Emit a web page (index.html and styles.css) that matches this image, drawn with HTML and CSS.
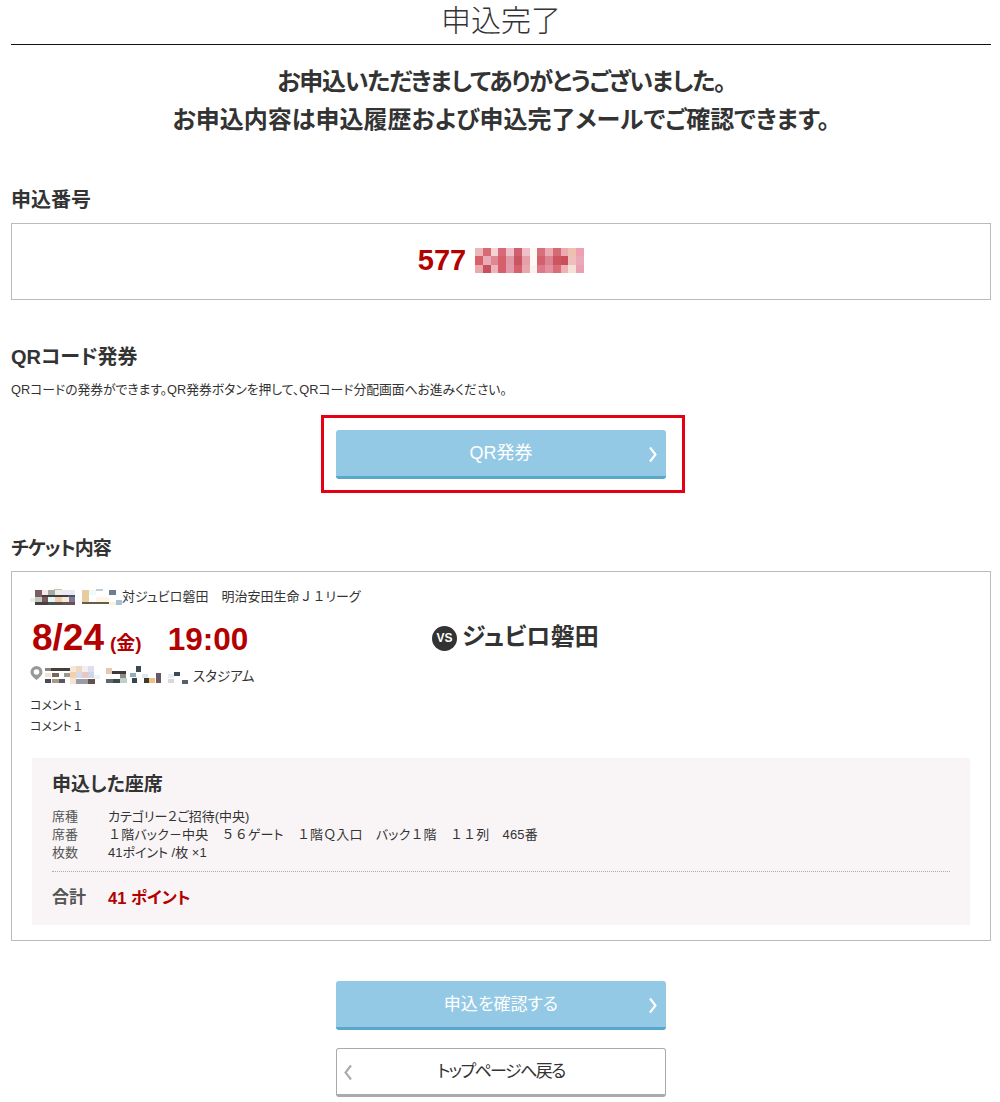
FILE: index.html
```html
<!DOCTYPE html>
<html lang="ja">
<head>
<meta charset="utf-8">
<title>申込完了</title>
<link rel="stylesheet" href="styles.css">
</head>
<body>
<main class="page">
  <h1 class="page-title">申込完了</h1>
  <div class="thanks">
    <p class="thanks-line tight">お申込いただきましてありがとうございました。</p>
    <p class="thanks-line">お申込内容は申込履歴および申込完了メールでご確認できます。</p>
  </div>

  <h2 class="section-title first">申込番号</h2>
  <div class="number-box">
    <span class="number">577</span>
    <svg class="mosaic-number" width="109" height="25" viewBox="0 0 14 3" preserveAspectRatio="none" shape-rendering="crispEdges" aria-hidden="true">
      <rect x="0" y="0" width="1.01" height="1.01" fill="#e9b9b9"/><rect x="1" y="0" width="1.01" height="1.01" fill="#d86a78"/><rect x="2" y="0" width="1.01" height="1.01" fill="#f2d5d0"/><rect x="3" y="0" width="1.01" height="1.01" fill="#d8697a"/><rect x="4" y="0" width="1.01" height="1.01" fill="#efbfc9"/><rect x="5" y="0" width="1.01" height="1.01" fill="#d06070"/><rect x="6" y="0" width="1.01" height="1.01" fill="#efc0c8"/><rect x="7" y="0" width="1.01" height="1.01" fill="#fdfaf5"/><rect x="8" y="0" width="1.01" height="1.01" fill="#d8707c"/><rect x="9" y="0" width="1.01" height="1.01" fill="#e9aab4"/><rect x="10" y="0" width="1.01" height="1.01" fill="#d46a72"/><rect x="11" y="0" width="1.01" height="1.01" fill="#eeaab4"/><rect x="12" y="0" width="1.01" height="1.01" fill="#eec0b0"/><rect x="13" y="0" width="1" height="1.01" fill="#eca0b0"/>
      <rect x="0" y="1" width="1.01" height="1.01" fill="#d8606a"/><rect x="1" y="1" width="1.01" height="1.01" fill="#e8acb8"/><rect x="2" y="1" width="1.01" height="1.01" fill="#dd8892"/><rect x="3" y="1" width="1.01" height="1.01" fill="#d55f6c"/><rect x="4" y="1" width="1.01" height="1.01" fill="#e09aa4"/><rect x="5" y="1" width="1.01" height="1.01" fill="#c85562"/><rect x="6" y="1" width="1.01" height="1.01" fill="#e8a0a8"/><rect x="7" y="1" width="1.01" height="1.01" fill="#fdfaf5"/><rect x="8" y="1" width="1.01" height="1.01" fill="#d4606e"/><rect x="9" y="1" width="1.01" height="1.01" fill="#dd8490"/><rect x="10" y="1" width="1.01" height="1.01" fill="#cc5560"/><rect x="11" y="1" width="1.01" height="1.01" fill="#c8505c"/><rect x="12" y="1" width="1.01" height="1.01" fill="#eebfbb"/><rect x="13" y="1" width="1" height="1.01" fill="#eaa8b8"/>
      <rect x="0" y="2" width="1.01" height="1" fill="#e8aaaa"/><rect x="1" y="2" width="1.01" height="1" fill="#c95060"/><rect x="2" y="2" width="1.01" height="1" fill="#eab5bb"/><rect x="3" y="2" width="1.01" height="1" fill="#d5606c"/><rect x="4" y="2" width="1.01" height="1" fill="#e39aaa"/><rect x="5" y="2" width="1.01" height="1" fill="#d6606e"/><rect x="6" y="2" width="1.01" height="1" fill="#e8a8b0"/><rect x="7" y="2" width="1.01" height="1" fill="#f8f3ee"/><rect x="8" y="2" width="1.01" height="1" fill="#dc7888"/><rect x="9" y="2" width="1.01" height="1" fill="#e590a0"/><rect x="10" y="2" width="1.01" height="1" fill="#d86f78"/><rect x="11" y="2" width="1.01" height="1" fill="#eeb0b5"/><rect x="12" y="2" width="1.01" height="1" fill="#f5e0d8"/><rect x="13" y="2" width="1" height="1" fill="#eaa0b0"/>
    </svg>
  </div>

  <h2 class="section-title qr">QRコード発券</h2>
  <p class="note">QRコードの発券ができます。QR発券ボタンを押して、QRコード分配画面へお進みください。</p>
  <div class="highlight-wrap">
    <div class="highlight">
      <a class="btn btn-primary btn-qr">QR発券
        <svg class="chevron chevron-right" width="10" height="17" viewBox="0 0 10 17" aria-hidden="true"><path d="M2 1.500l5.500 7-5.500 7" fill="none" stroke="#fff" stroke-width="2.100"/></svg>
      </a>
    </div>
  </div>

  <h2 class="section-title ticket">チケット内容</h2>
  <section class="card">
    <div class="match-line">
      <svg class="mosaic-team" width="92" height="16" viewBox="0 0 92 16" shape-rendering="crispEdges" aria-hidden="true">
        <rect x="24" y="0" width="8" height="1" fill="#c9bdb8"/>
        <rect x="5" y="1" width="7" height="7" fill="#7b5e60"/><rect x="12" y="1" width="6" height="5" fill="#f5e8e8"/><rect x="18" y="1" width="7" height="5" fill="#a5aaa0"/><rect x="25" y="1" width="7" height="5" fill="#eceee8"/><rect x="32" y="1" width="7" height="5" fill="#efe6f5"/><rect x="39" y="1" width="6" height="5" fill="#e8eaf0"/><rect x="52" y="1" width="7" height="12" fill="#e8cb9e"/><rect x="59" y="1" width="7" height="5" fill="#eefbfd"/><rect x="66" y="0" width="7" height="2" fill="#c6ccd4"/><rect x="79" y="1" width="7" height="5" fill="#6c7e90"/>
        <rect x="12" y="6" width="26" height="2" fill="#3e3e40"/><rect x="38" y="6" width="7" height="3" fill="#505068"/>
        <rect x="0" y="9" width="7" height="4" fill="#e5f2e2"/><rect x="5" y="8" width="7" height="5" fill="#c8c8c8"/><rect x="12" y="8" width="6" height="5" fill="#7a5a58"/><rect x="18" y="8" width="7" height="5" fill="#e0f8f8"/><rect x="25" y="8" width="7" height="5" fill="#f0cca8"/><rect x="32" y="8" width="7" height="5" fill="#f6ead8"/><rect x="39" y="8" width="6" height="5" fill="#7a7a98"/><rect x="66" y="8" width="13" height="5" fill="#fbf6e8"/>
        <rect x="5" y="13" width="13" height="3" fill="#4a4040"/><rect x="18" y="13" width="14" height="3" fill="#50504c"/><rect x="32" y="13" width="13" height="3" fill="#6a5050"/><rect x="52" y="13" width="27" height="2" fill="#6a5a4a"/><rect x="79" y="13" width="7" height="3" fill="#fdf2d8"/><rect x="86" y="11" width="6" height="5" fill="#a8c0d8"/>
      </svg><span>対ジュビロ磐田　明治安田生命<span class="fw">Ｊ１</span>リーグ</span>
    </div>
    <div class="match-main">
      <div class="datetime"><span class="date">8/24</span><span class="weekday">(金)</span><span class="time">19:00</span></div>
      <div class="opponent"><span class="vs">VS</span><span class="opponent-name">ジュビロ磐田</span></div>
    </div>
    <div class="venue">
      <svg class="pin" width="13" height="14" viewBox="0 0 13 14" aria-hidden="true"><path fill-rule="evenodd" d="M6.500 0A6 6 0 0 0 .5 6c0 3.400 3.600 6 6 8 2.400-2 6-4.600 6-8a6 6 0 0 0-6-6zm0 3.200a2.800 2.800 0 1 1 0 5.600 2.800 2.800 0 0 1 0-5.600z" fill="#999"/></svg>
      <svg class="mosaic-venue" width="146" height="18" viewBox="0 0 146 18" shape-rendering="crispEdges" aria-hidden="true">
        <rect x="1" y="2" width="6" height="3" fill="#8a8078"/><rect x="7" y="2" width="19" height="3" fill="#433f3c"/><rect x="26" y="0" width="6" height="6" fill="#f4e8dc"/><rect x="32" y="0" width="6" height="6" fill="#eed8be"/><rect x="38" y="0" width="6" height="6" fill="#f0f0f4"/><rect x="44" y="0" width="6" height="6" fill="#e4dcee"/><rect x="62" y="2" width="6" height="6" fill="#e8c8b0"/><rect x="68" y="5" width="14" height="3" fill="#3e3a38"/><rect x="92" y="0" width="5" height="6" fill="#3a4a50"/>
        <rect x="1" y="7" width="6" height="4" fill="#f0e4d8"/><rect x="8" y="7" width="7" height="4" fill="#78685c"/><rect x="20" y="7" width="6" height="4" fill="#a09890"/><rect x="26" y="6" width="6" height="6" fill="#f4d0ac"/><rect x="32" y="6" width="6" height="6" fill="#d4dcec"/><rect x="38" y="6" width="6" height="6" fill="#e8c8c0"/><rect x="44" y="6" width="6" height="6" fill="#d0d4e8"/><rect x="50" y="9" width="6" height="4" fill="#eef2f6"/><rect x="76" y="8" width="6" height="4" fill="#8a8a86"/><rect x="86" y="7" width="6" height="4" fill="#90b0b8"/><rect x="98" y="8" width="6" height="4" fill="#dfe8ec"/><rect x="112" y="7" width="5" height="10" fill="#685868"/><rect x="124" y="8" width="6" height="4" fill="#e8ecf4"/><rect x="130" y="6" width="6" height="4" fill="#3a4a58"/>
        <rect x="1" y="13" width="6" height="4" fill="#4a4a54"/><rect x="8" y="13" width="7" height="4" fill="#a89888"/><rect x="15" y="13" width="6" height="4" fill="#58585e"/><rect x="26" y="12" width="6" height="6" fill="#f4e4d0"/><rect x="32" y="13" width="12" height="5" fill="#9a9aa8"/><rect x="44" y="13" width="7" height="5" fill="#64504c"/><rect x="62" y="13" width="7" height="4" fill="#60686c"/><rect x="69" y="13" width="7" height="4" fill="#3c4c4c"/><rect x="76" y="12" width="7" height="5" fill="#c0d0c8"/><rect x="88" y="12" width="5" height="5" fill="#39454a"/><rect x="100" y="12" width="5" height="5" fill="#3e3a30"/><rect x="105" y="12" width="6" height="5" fill="#f0c080"/><rect x="124" y="13" width="6" height="4" fill="#d8d8dc"/><rect x="138" y="14" width="6" height="4" fill="#55606c"/>
      </svg><span class="venue-name">スタジアム</span>
    </div>
    <div class="comments">
      <p class="comment">コメント<span class="fw">１</span></p>
      <p class="comment">コメント<span class="fw">１</span></p>
    </div>

    <div class="seat-panel">
      <h3 class="seat-title">申込した座席</h3>
      <dl class="seat-list">
        <div class="seat-row"><dt>席種</dt><dd>カテゴリー２ご招待(中央)</dd></div>
        <div class="seat-row"><dt>席番</dt><dd class="seat-number"><span class="fw">１</span>階バック－中央　<span class="fw">５６</span>ゲート　<span class="fw">１</span>階<span class="fw">Ｑ</span>入口　バック<span class="fw">１</span>階　<span class="fw">１１</span>列　465番</dd></div>
        <div class="seat-row"><dt>枚数</dt><dd>41ポイント /枚 ×1</dd></div>
      </dl>
      <div class="total"><span class="total-label">合計</span><span class="total-value">41 ポイント</span></div>
    </div>
  </section>

  <div class="actions">
    <a class="btn btn-primary">申込を確認する
      <svg class="chevron chevron-right" width="10" height="17" viewBox="0 0 10 17" aria-hidden="true"><path d="M2 1.500l5.500 7-5.500 7" fill="none" stroke="#fff" stroke-width="2.100"/></svg>
    </a>
    <a class="btn btn-secondary">
      <svg class="chevron chevron-left" width="10" height="17" viewBox="0 0 10 17" aria-hidden="true"><path d="M8 1.500L2.500 8.500 8 15.500" fill="none" stroke="#aaa" stroke-width="2.100"/></svg>
      トップページへ戻る
    </a>
  </div>
</main>
</body>
</html>
```

FILE: styles.css
```css
* { box-sizing: border-box; }
html, body { margin: 0; padding: 0; background: #fff; }
body {
  color: #333;
  font-family: "Liberation Sans", "Noto Sans CJK JP", sans-serif;
  font-feature-settings: "palt";
  overflow: hidden;
}
.page { width: 980px; margin-left: 11px; }
.page-title {
  margin: 0;
  height: 45px;
  padding-top: 1px;
  border-bottom: 1px solid #111;
  font-size: 30px;
  line-height: 40px;
  font-weight: 300;
  text-align: center;
}
.thanks { margin-top: 18px; }
.thanks-line {
  margin: 0;
  font-size: 24px;
  line-height: 38px;
  font-weight: 700;
  text-align: center;
}
.thanks-line.tight { letter-spacing: -1.2px; }
.section-title {
  margin: 0;
  font-size: 20px;
  line-height: 26px;
  font-weight: 700;
}
.section-title.first { margin-top: 48px; }
.section-title.qr { margin-top: 44px; }
.section-title.ticket { margin-top: 43px; font-size: 19px; letter-spacing: -1px; }
.number-box {
  margin-top: 10px;
  height: 77px;
  padding-bottom: 2px;
  border: 1px solid #bbb;
  display: flex;
  align-items: center;
  justify-content: center;
  gap: 9px;
}
.number { color: #b30000; font-size: 29px; font-weight: 700; }
.mosaic-number { display: block; }
.note { margin: 11px 0 0; font-size: 12.8px; line-height: 18px; }
.highlight-wrap { margin-top: 16px; display: flex; justify-content: center; }
.highlight {
  width: 364px;
  height: 78px;
  border: 3px solid #e60012;
  padding: 12px;
  margin-left: 4px;
  display: flex;
  justify-content: flex-start;
}
.btn {
  position: relative;
  display: flex;
  align-items: center;
  justify-content: center;
  width: 330px;
  height: 49px;
  flex: none;
  border-radius: 3px;
  padding-bottom: 4px;
  font-size: 17px;
}
.btn-qr { font-size: 18px; }
.btn-primary { background: #94c9e6; border-bottom: 3px solid #58a8cc; color: #fff; }
.btn-secondary { background: #fff; border: 1px solid #aaa; border-bottom: 3px solid #aaa; color: #333; letter-spacing: -1.6px; }
.chevron { position: absolute; top: 16px; }
.chevron-right { right: 8px; }
.chevron-left { left: 6px; top: 15px; }
.card {
  margin-top: 9px;
  height: 370px;
  border: 1px solid #bbb;
  padding: 16px 20px 15px 18px;
}
.fw { font-feature-settings: normal; }
.match-line { display: flex; align-items: center; height: 18px; font-size: 13px; line-height: 18px; }
.mosaic-team, .mosaic-venue { display: block; flex: none; }
.match-main { margin-top: 10px; height: 44px; display: flex; align-items: center; }
.datetime { width: 400px; margin-left: 2px; display: flex; align-items: baseline; color: #b30000; font-weight: 700; }
.date { font-size: 37px; }
.weekday { font-size: 19px; margin-left: 6px; }
.time { font-size: 31.5px; margin-left: 26px; }
.opponent { display: flex; align-items: center; gap: 5px; }
.vs {
  display: flex; align-items: center; justify-content: center;
  width: 25px; height: 25px; border-radius: 50%;
  background: #333; color: #fff; font-size: 12px; font-weight: 700;
}
.opponent-name { font-size: 24px; font-weight: 700; padding-bottom: 7px; }
.venue { margin-top: 5px; height: 20px; display: flex; align-items: center; font-size: 13.5px; }
.pin { flex: none; margin-right: 1px; margin-top: -4px; }
.venue-name { margin-left: 3px; }
.comments { margin-top: 11px; }
.comment { margin: 0; font-size: 12px; line-height: 21px; }
.seat-panel {
  margin: 20px 0 0 2px;
  width: 938px;
  height: 167px;
  background: #f9f5f7;
  padding: 14px 20px 0;
}
.seat-title { margin: 0; font-size: 19px; line-height: 26px; font-weight: 700; }
.seat-list {
  margin: 10px 0 0;
  padding-bottom: 9px;
  border-bottom: 1px dotted #aaa;
  font-size: 13px;
  line-height: 18px;
}
.seat-row { display: flex; }
.seat-row dt { width: 56px; color: #555; }
.seat-row dd { margin: 0; }
.seat-row .seat-number { letter-spacing: 0.15px; word-spacing: 1px; }
.total { margin-top: 13px; display: flex; align-items: center; font-weight: 700; line-height: 26px; }
.total-label { width: 56px; color: #555; font-size: 17px; }
.total-value { color: #b30000; font-size: 16.5px; }
.actions { margin-top: 40px; display: flex; flex-direction: column; align-items: center; gap: 18px; }
```
